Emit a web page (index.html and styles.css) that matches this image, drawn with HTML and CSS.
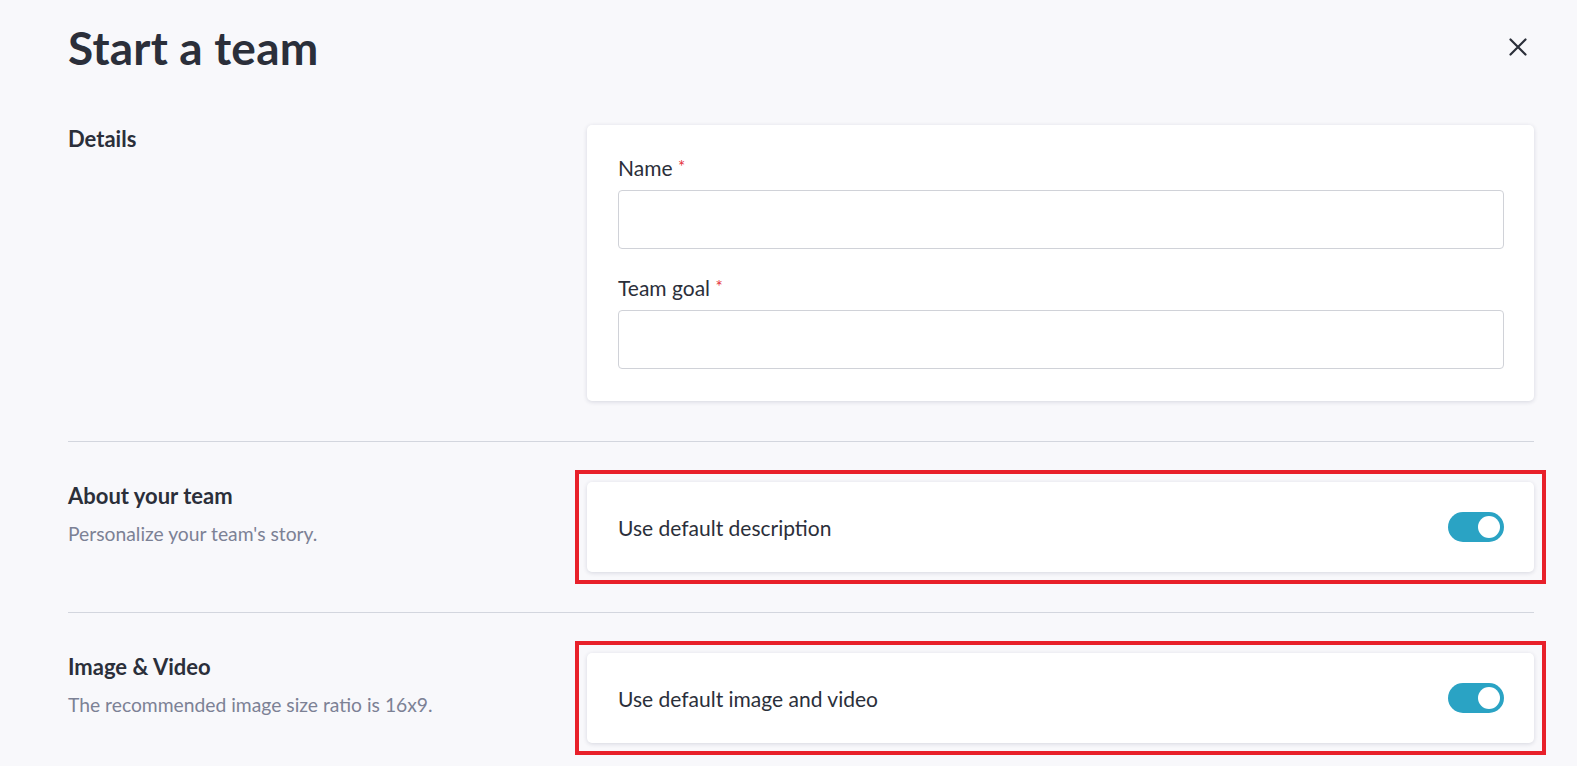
FILE: index.html
```html
<!DOCTYPE html>
<html lang="en">
<head>
    <meta charset="UTF-8">
    <meta name="viewport" content="width=device-width, initial-scale=1.0">
    <title>Start a team</title>
    <link rel="stylesheet" href="styles.css">
</head>
<body>
    <div class="page">
        <div class="page-header">
            <h1>Start a team</h1>
            <button class="close-btn" aria-label="Close">
                <svg width="20" height="20" viewBox="0 0 20 20">
                    <path d="M2.5 2.5 L17.5 17.5 M17.5 2.5 L2.5 17.5" stroke="#2b2f3a" stroke-width="2.2" stroke-linecap="round"/>
                </svg>
            </button>
        </div>

        <!-- Details -->
        <div class="section section-first">
            <div class="section-info">
                <h3>Details</h3>
            </div>
            <div class="card form-card">
                <label class="field-label">Name <span class="required">*</span></label>
                <input type="text" class="text-input">
                <label class="field-label">Team goal <span class="required">*</span></label>
                <input type="text" class="text-input">
            </div>
        </div>

        <!-- About your team -->
        <div class="section">
            <div class="section-info">
                <h3>About your team</h3>
                <p>Personalize your team's story.</p>
            </div>
            <div class="highlight">
                <div class="card toggle-card">
                    <span>Use default description</span>
                    <span class="toggle on"><span class="knob"></span></span>
                </div>
            </div>
        </div>

        <!-- Image & Video -->
        <div class="section section-last">
            <div class="section-info">
                <h3>Image &amp; Video</h3>
                <p>The recommended image size ratio is 16x9.</p>
            </div>
            <div class="highlight">
                <div class="card toggle-card">
                    <span>Use default image and video</span>
                    <span class="toggle on"><span class="knob"></span></span>
                </div>
            </div>
        </div>
    </div>
</body>
</html>
```

FILE: styles.css
```css
/* General Reset */
* {
    margin: 0;
    padding: 0;
    box-sizing: border-box;
}

body {
    font-family: Lato, "Open Sans", sans-serif;
    background-color: #f8f8fb;
    color: #2b2f3a;
}

.page {
    padding: 0 43px 0 68px;
}

/* Header */
.page-header {
    display: flex;
    justify-content: space-between;
    align-items: center;
    height: 98px;
    padding-bottom: 4px;
}

.page-header h1 {
    font-size: 46px;
    font-weight: 700;
    letter-spacing: 0.2px;
}

.close-btn {
    background: none;
    border: none;
    cursor: pointer;
    margin-right: 6px;
    display: flex;
}

/* Sections */
.section {
    display: grid;
    grid-template-columns: 519px 1fr;
    padding: 40px 0;
    border-top: 1px solid #d3d6de;
}

.section-first {
    border-top: none;
    padding-top: 27px;
}

.section-last {
    padding-bottom: 14px;
}

.section-info h3 {
    font-size: 22px;
    font-weight: 700;
}

.section-info p {
    font-size: 19.3px;
    color: #7c8195;
    margin-top: 13px;
}

/* Cards */
.card {
    background-color: #ffffff;
    border-radius: 5px;
    box-shadow: 0 1px 4px rgba(40, 45, 80, 0.16);
}

.form-card {
    display: flex;
    flex-direction: column;
    padding: 30px 30px 32px 31px;
}

.field-label {
    font-size: 21px;
    margin-bottom: 10px;
}

.required {
    color: #e5323b;
    font-size: 17px;
    vertical-align: 3px;
}

.text-input {
    height: 59px;
    border: 1px solid #d0d2d8;
    border-radius: 4px;
    margin-bottom: 26px;
    font-size: 18px;
    padding: 0 12px;
}

.text-input:last-child {
    margin-bottom: 0;
}

.toggle-card {
    display: flex;
    justify-content: space-between;
    align-items: center;
    height: 90px;
    padding: 0 30px 0 31px;
    font-size: 21px;
}

/* red annotation boxes */
.highlight {
    border: 4px solid #e8202a;
    padding: 8px;
    margin: -12px;
}

/* Toggle switch */
.toggle {
    width: 56px;
    height: 30px;
    border-radius: 15px;
    background-color: #2aa3c4;
    display: flex;
    align-items: center;
    justify-content: flex-end;
    padding: 0 4px;
}

.knob {
    width: 22px;
    height: 22px;
    border-radius: 50%;
    background-color: #ffffff;
}
```
